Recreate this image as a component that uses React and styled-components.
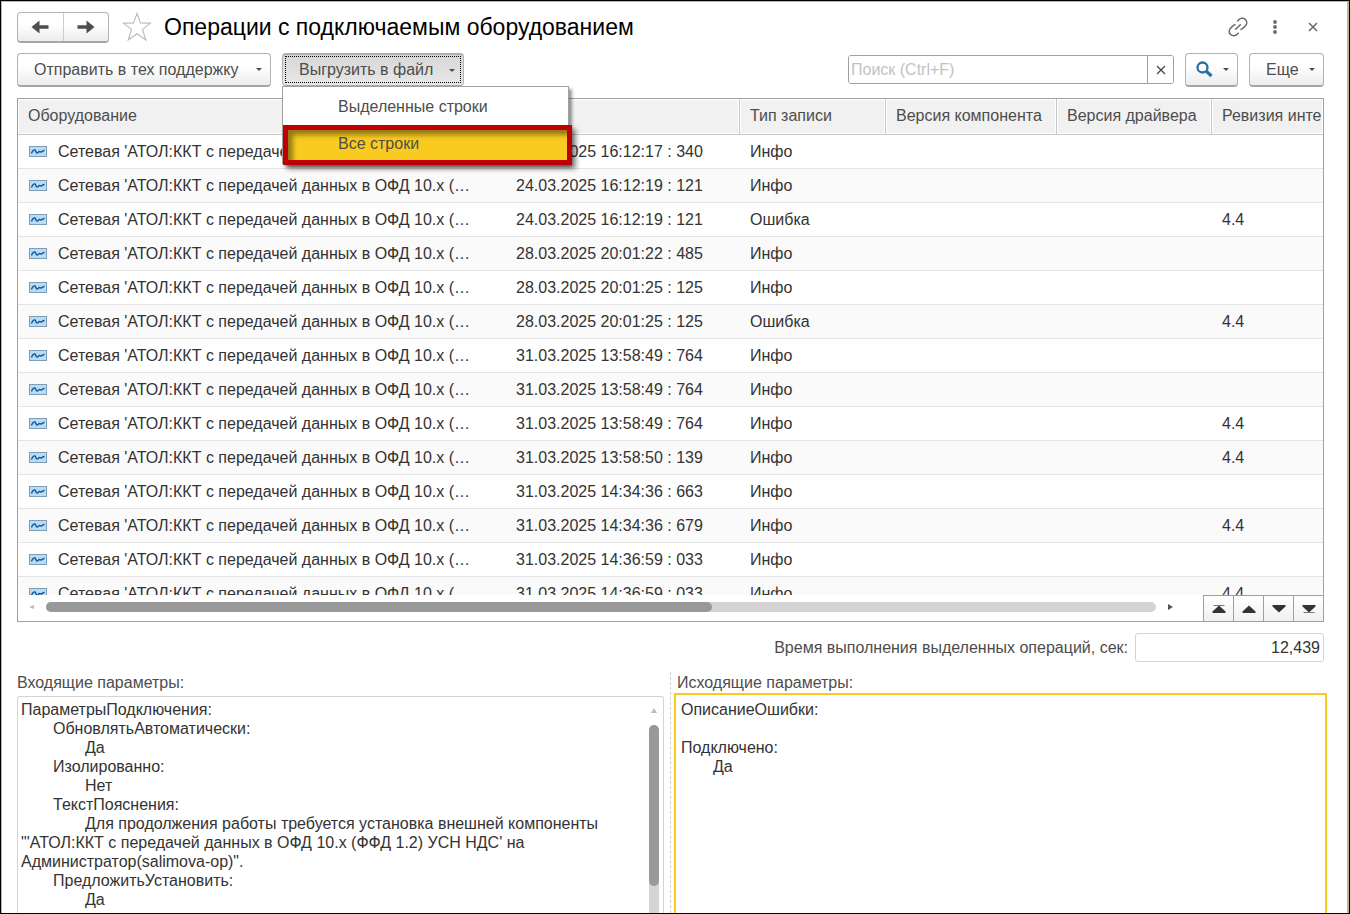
import React from "react";
import styled, { createGlobalStyle, css } from "styled-components";

const GlobalStyle = createGlobalStyle`
  *, *::before, *::after { box-sizing: border-box; }
  body { margin: 0; background: #fff; }
  body, button, input, textarea { font-family: "Liberation Sans", Arial, sans-serif; font-size: 16px; }
`;

const AppWindow = styled.div`
  display: flex;
  flex-direction: column;
  min-height: 100vh;
  border: 1px solid #000;
  color: #333;
`;

const Form = styled.main`
  flex: 1;
  display: flex;
  flex-direction: column;
  padding: 10px 23px 0 15px;
  border: 1px solid #c9b987;
  border-right: 2px solid #bdb597;
  border-bottom: 0;
`;

const raised = css`
  border: 1px solid #b3b3b3;
  border-bottom: 2px solid #a6a6a6;
  border-radius: 4px;
  background: linear-gradient(#fff 40%, #ededed);
  color: #4d4d4d;
`;

const TitleBar = styled.header`
  display: flex;
  align-items: flex-start;
  height: 31px;
`;

const NavGroup = styled.div`
  ${raised}
  display: flex;
  width: 92px;
  height: 31px;
`;

const NavButton = styled.button`
  flex: 1;
  display: grid;
  place-items: center;
  padding: 0;
  border: 0;
  background: none;
  & + & { border-left: 1px solid #ccc; }
`;

const IconButton = styled.button`
  display: grid;
  place-items: center;
  width: ${(p) => p.$width}px;
  height: 29px;
  padding: 0;
  border: 0;
  background: none;
  color: #6b6b6b;
`;

const Title = styled.h1`
  flex: 1;
  margin: 0;
  color: #000;
  font-size: 23px;
  font-weight: 400;
  line-height: 31px;
  white-space: nowrap;
`;

const Toolbar = styled.div`
  display: flex;
  align-items: flex-start;
  height: 34px;
  margin-top: 10px;
`;

const Spacer = styled.div`
  flex: 1;
`;

const MenuAnchor = styled.div`
  position: relative;
  margin-left: 11px;
`;

const CommandButton = styled.button`
  ${raised}
  display: flex;
  align-items: center;
  justify-content: space-between;
  width: ${(p) => p.$width}px;
  height: 34px;
  margin-left: ${(p) => p.$gap || 0}px;
  padding: 0 8px 0 ${(p) => p.$indent || 16}px;
  white-space: nowrap;
  ${(p) =>
    p.$pressed &&
    css`
      height: 33px;
      border-top: 2px solid #b0b0b0;
      border-bottom-width: 1px;
      background: linear-gradient(#d6d6d6, #e8e8e8);
      outline: 1px dotted #000;
      outline-offset: -4px;
    `}
`;

const Menu = styled.ul`
  position: absolute;
  z-index: 2;
  top: 33px;
  left: 0;
  width: 287px;
  margin: 0;
  padding: 1px 0;
  list-style: none;
  border: 1px solid #a0a0a0;
  background: #fff;
  box-shadow: 3px 3px 3px rgba(0, 0, 0, 0.4);
`;

const MenuItem = styled.li`
  position: relative;
  height: 37px;
  background: ${(p) => (p.$current ? "#f9cb20" : "#fff")};
`;

const MenuCommand = styled.button`
  display: block;
  width: 100%;
  height: 37px;
  padding: 0 0 0 55px;
  border: 0;
  background: none;
  color: #4d4d4d;
  text-align: left;
`;

const Highlight = styled.span`
  position: absolute;
  inset: 0 -4px -3px 0;
  border: 5px solid #c00000;
  box-shadow: 4px 4px 5px rgba(0, 0, 0, 0.45), inset 5px 5px 5px rgba(0, 0, 0, 0.4);
  pointer-events: none;
`;

const SearchBox = styled.div`
  display: flex;
  width: 326px;
  height: 29px;
  margin-top: 2px;
  border: 1px solid #a0a0a0;
  border-radius: 3px;
  overflow: hidden;
`;

const SearchInput = styled.input`
  flex: 1;
  min-width: 0;
  padding: 0 2px;
  border: 0;
  color: #333;
  &::placeholder { color: #c2c2c2; opacity: 1; }
`;

const ClearButton = styled.button`
  display: grid;
  place-items: center;
  width: 26px;
  padding: 0;
  border: 0;
  border-left: 1px solid #a0a0a0;
  background: #fff;
`;

const TablePanel = styled.section`
  margin-top: 11px;
  border: 1px solid #a0a0a0;
`;

const TableViewport = styled.div`
  height: 496px;
  overflow: hidden;
`;

const LogTable = styled.table`
  width: 100%;
  table-layout: fixed;
  border-collapse: separate;
  border-spacing: 0;
  white-space: nowrap;
`;

const HeadCell = styled.th`
  width: ${(p) => (p.$width ? `${p.$width}px` : "auto")};
  height: 36px;
  padding: 0 0 2px 10px;
  overflow: hidden;
  border-bottom: 1px solid #c8c8c8;
  background: #f1f1f1;
  box-shadow: inset 0 0 0 1px #fff;
  color: #4d4d4d;
  font-weight: 400;
  text-align: left;
  &:not(:last-child) { border-right: 1px solid #c8c8c8; }
`;

const Row = styled.tr`
  &:nth-child(even) { background: #fafafa; }
`;

const Cell = styled.td`
  height: 34px;
  padding: 0 0 0 10px;
  overflow: hidden;
  border-bottom: 1px solid #e4e4e4;
`;

const Device = styled.span`
  display: flex;
  align-items: center;
  gap: 11px;
  padding-left: 1px;
`;

const TableFooter = styled.div`
  display: flex;
  align-items: stretch;
  height: 26px;
`;

const HScroll = styled.div`
  flex: 1;
  display: flex;
  align-items: center;
  gap: 11px;
  padding: 0 30px 2px 11px;
`;

const HTrack = styled.div`
  flex: 1;
  height: 10px;
  border-radius: 5px;
  background: #d4d4d4;
`;

const HThumb = styled.div`
  width: 60%;
  height: 10px;
  border-radius: 5px;
  background: #999;
`;

const StepButton = styled.button`
  display: grid;
  place-items: center;
  width: 30px;
  padding: 0;
  border: 0;
  border-top: 1px solid #a0a0a0;
  border-left: 1px solid #a0a0a0;
  background: linear-gradient(#fff, #f0f0f0);
`;

const TotalRow = styled.div`
  display: flex;
  align-items: center;
  justify-content: flex-end;
  gap: 7px;
  margin-top: 11px;
  color: #4d4d4d;
`;

const TotalInput = styled.input`
  width: 189px;
  height: 29px;
  padding: 0 3px;
  border: 1px solid #d4d4d4;
  border-radius: 3px;
  color: #333;
  text-align: right;
`;

const Panels = styled.div`
  flex: 1;
  display: grid;
  grid-template-columns: 1fr calc(50% + 1px);
  margin: 10px -3px 0 0;
`;

const Panel = styled.section`
  display: flex;
  flex-direction: column;
  min-width: 0;
  padding-right: ${(p) => (p.$split ? 6 : 0)}px;
  padding-left: ${(p) => (p.$split ? 0 : 3)}px;
  border-right: ${(p) => (p.$split ? "1px dashed #d0d0d0" : "0")};
`;

const PanelLabel = styled.label`
  height: 21px;
  padding-left: ${(p) => p.$indent || 0}px;
  color: #4d4d4d;
  line-height: 22px;
`;

const TextBox = styled.div`
  flex: 1;
  display: flex;
  min-height: 216px;
  margin-top: ${(p) => (p.$focused ? 0 : 3)}px;
  border: ${(p) => (p.$focused ? "2px solid #f9cb20" : "1px solid #d4d4d4")};
  border-bottom: 0;
  border-radius: ${(p) => (p.$focused ? "0" : "3px 3px 0 0")};
`;

const TextArea = styled.textarea`
  flex: 1;
  min-width: 0;
  padding: ${(p) => (p.$focused ? "5px 5px 0" : "3px 3px 0")};
  overflow: hidden;
  border: 0;
  outline: 0;
  background: none;
  color: #333;
  line-height: 19px;
  resize: none;
  tab-size: 32px;
`;

const VScroll = styled.div`
  display: flex;
  flex-direction: column;
  align-items: center;
  width: 18px;
  padding-top: 11px;
`;

const VTrack = styled.div`
  flex: 1;
  width: 10px;
  margin-top: 11px;
  border-radius: 5px 5px 0 0;
  background: #d4d4d4;
`;

const VThumb = styled.div`
  height: 161px;
  border-radius: 5px;
  background: #999;
`;

const Caret = () => (
  <svg width="6" height="3" viewBox="0 0 6 3" aria-hidden="true">
    <path d="M0 0h6L3 3z" fill="#4d4d4d" />
  </svg>
);

const ArrowIcon = ({ right }) => (
  <svg width="18" height="14" viewBox="0 0 18 14" aria-hidden="true">
    <path
      transform={right ? "matrix(-1 0 0 1 18 0)" : undefined}
      d="M17.500 5.300H8.500V.5L.5 7l8 6.500V8.700h9z"
      fill="#4d4d4d"
    />
  </svg>
);

const StarIcon = () => (
  <svg width="30" height="29" viewBox="0 0 30 29" aria-hidden="true">
    <path
      d="M15 1.500l3.500 9.400 10 .2-8 6.300 3.300 10.600L15 21.700l-8.800 6.300 3.300-10.600-8-6.300 10-.2z"
      fill="#fff"
      stroke="#b4bbc2"
      strokeWidth="1.100"
    />
  </svg>
);

const LinkIcon = () => (
  <svg width="20" height="20" viewBox="0 0 20 20" fill="none" stroke="#6b6b6b" strokeWidth="1.600" aria-hidden="true">
    <path d="M9.300 4.300l1.500-1.600c1.700-1.700 4.800-1.900 6.600-.2 1.800 1.700 1.700 4.500.1 6.200l-2.500 2.500c-.8.800-1.600 1.200-2.600 1.300" />
    <path d="M10.700 15.700l-1.500 1.600c-1.700 1.700-4.800 1.900-6.600.2-1.800-1.700-1.700-4.500-.1-6.200L5 8.800c.8-.8 1.600-1.200 2.600-1.300" />
    <path d="M7.200 12.800l5.600-5.600" />
  </svg>
);

const KebabIcon = () => (
  <svg width="4" height="14" viewBox="0 0 4 14" fill="#6b6b6b" aria-hidden="true">
    <circle cx="2" cy="2" r="1.900" />
    <circle cx="2" cy="7" r="1.900" />
    <circle cx="2" cy="12" r="1.900" />
  </svg>
);

const CrossIcon = ({ color, weight }) => (
  <svg width="10" height="10" viewBox="0 0 10 10" stroke={color} strokeWidth={weight} aria-hidden="true">
    <path d="M1 1l8 8M9 1L1 9" />
  </svg>
);

const MagnifierIcon = () => (
  <svg width="17" height="17" viewBox="0 0 17 17" fill="none" stroke="#2471a8" aria-hidden="true">
    <circle cx="6.500" cy="6.500" r="5" strokeWidth="2.300" />
    <path d="M10 10l5.500 5" strokeWidth="3.200" />
  </svg>
);

const DeviceIcon = () => (
  <svg width="18" height="11" viewBox="0 0 18 11" fill="none" aria-hidden="true">
    <rect x=".5" y=".5" width="17" height="10" fill="#b9dbf3" stroke="#7f9db5" />
    <path d="M2.500 7.500C3.500 4.500 5 3.500 6 4s.8 3 2 3 1.500-1.500 2.500-1.500.8.800 1.700.5S13.500 4.500 15.500 4.500" stroke="#10559a" strokeWidth="1.400" />
  </svg>
);

const ScrollArrow = ({ d, color = "#555" }) => (
  <svg width="6" height="6" viewBox="0 0 6 6" aria-hidden="true">
    <path d={d} fill={color} />
  </svg>
);

const StepIcon = ({ down, edge }) => (
  <svg width="14" height="10" viewBox="0 0 14 10" aria-hidden="true">
    <g transform={down ? "rotate(180 7 5)" : undefined} fill="#333">
      <path d="M7 1.500l6.500 6v1.500H.5V7.500z" />
      {edge && <path d="M1.500 1h11v1h-11z" fill="#777" />}
    </g>
  </svg>
);

const DEVICE = "Сетевая 'АТОЛ:ККТ с передачей данных в ОФД 10.x (…";

const columns = [
  { title: "Оборудование" },
  { title: "", width: 234 },
  { title: "Тип записи", width: 146 },
  { title: "Версия компонента", width: 171 },
  { title: "Версия драйвера", width: 155 },
  { title: "Ревизия инте", width: 111 },
];

const records = [
  ["24.03.2025 16:12:17 : 340", "Инфо", ""],
  ["24.03.2025 16:12:19 : 121", "Инфо", ""],
  ["24.03.2025 16:12:19 : 121", "Ошибка", "4.4"],
  ["28.03.2025 20:01:22 : 485", "Инфо", ""],
  ["28.03.2025 20:01:25 : 125", "Инфо", ""],
  ["28.03.2025 20:01:25 : 125", "Ошибка", "4.4"],
  ["31.03.2025 13:58:49 : 764", "Инфо", ""],
  ["31.03.2025 13:58:49 : 764", "Инфо", ""],
  ["31.03.2025 13:58:49 : 764", "Инфо", "4.4"],
  ["31.03.2025 13:58:50 : 139", "Инфо", "4.4"],
  ["31.03.2025 14:34:36 : 663", "Инфо", ""],
  ["31.03.2025 14:34:36 : 679", "Инфо", "4.4"],
  ["31.03.2025 14:36:59 : 033", "Инфо", ""],
  ["31.03.2025 14:36:59 : 033", "Инфо", "4.4"],
];

const incoming = [
  "ПараметрыПодключения:",
  "\tОбновлятьАвтоматически:",
  "\t\tДа",
  "\tИзолированно:",
  "\t\tНет",
  "\tТекстПояснения:",
  "\t\tДля продолжения работы требуется установка внешней компоненты \"'АТОЛ:ККТ с передачей данных в ОФД 10.x (ФФД 1.2) УСН НДС' на Администратор(salimova-op)\".",
  "\tПредложитьУстановить:",
  "\t\tДа",
].join("\n");

const outgoing = "ОписаниеОшибки:\n\nПодключено:\n\tДа";

export default function App() {
  return (
    <AppWindow>
      <GlobalStyle />
      <Form>
        <TitleBar>
          <NavGroup>
            <NavButton aria-label="Назад"><ArrowIcon /></NavButton>
            <NavButton aria-label="Вперед"><ArrowIcon right /></NavButton>
          </NavGroup>
          <IconButton $width={55} aria-label="В избранное"><StarIcon /></IconButton>
          <Title>Операции с подключаемым оборудованием</Title>
          <IconButton $width={20} aria-label="Получить ссылку"><LinkIcon /></IconButton>
          <IconButton $width={54} aria-label="Меню"><KebabIcon /></IconButton>
          <IconButton $width={22} aria-label="Закрыть"><CrossIcon color="#6b6b6b" weight="1.600" /></IconButton>
        </TitleBar>

        <Toolbar>
          <CommandButton $width={254}>Отправить в тех поддержку <Caret /></CommandButton>
          <MenuAnchor>
            <CommandButton $width={182} $pressed aria-expanded="true">Выгрузить в файл <Caret /></CommandButton>
            <Menu>
              <MenuItem><MenuCommand>Выделенные строки</MenuCommand></MenuItem>
              <MenuItem $current>
                <MenuCommand>Все строки</MenuCommand>
                <Highlight />
              </MenuItem>
            </Menu>
          </MenuAnchor>
          <Spacer />
          <SearchBox>
            <SearchInput type="text" placeholder="Поиск (Ctrl+F)" aria-label="Поиск" />
            <ClearButton aria-label="Очистить"><CrossIcon color="#444" weight="1.200" /></ClearButton>
          </SearchBox>
          <CommandButton $width={53} $gap={11} $indent={10} aria-label="Найти"><MagnifierIcon /><Caret /></CommandButton>
          <CommandButton $width={75} $gap={11}>Еще <Caret /></CommandButton>
        </Toolbar>

        <TablePanel>
          <TableViewport>
            <LogTable>
              <thead>
                <tr>
                  {columns.map((c, i) => (
                    <HeadCell key={i} $width={c.width}>{c.title}</HeadCell>
                  ))}
                </tr>
              </thead>
              <tbody>
                {records.map(([time, type, revision], i) => (
                  <Row key={i}>
                    <Cell><Device><DeviceIcon />{DEVICE}</Device></Cell>
                    <Cell>{time}</Cell>
                    <Cell>{type}</Cell>
                    <Cell />
                    <Cell />
                    <Cell>{revision}</Cell>
                  </Row>
                ))}
              </tbody>
            </LogTable>
          </TableViewport>
          <TableFooter>
            <HScroll>
              <ScrollArrow d="M5 1v4L0 3z" color="#bbb" />
              <HTrack><HThumb /></HTrack>
              <ScrollArrow d="M1 0v6l5-3z" />
            </HScroll>
            <StepButton aria-label="В начало"><StepIcon edge /></StepButton>
            <StepButton aria-label="Вверх"><StepIcon /></StepButton>
            <StepButton aria-label="Вниз"><StepIcon down /></StepButton>
            <StepButton aria-label="В конец"><StepIcon down edge /></StepButton>
          </TableFooter>
        </TablePanel>

        <TotalRow>
          <label htmlFor="total">Время выполнения выделенных операций, сек:</label>
          <TotalInput id="total" type="text" defaultValue="12,439" />
        </TotalRow>

        <Panels>
          <Panel $split>
            <PanelLabel htmlFor="incoming">Входящие параметры:</PanelLabel>
            <TextBox>
              <TextArea id="incoming" defaultValue={incoming} spellCheck={false} />
              <VScroll>
                <ScrollArrow d="M3 0l3 5H0z" color="#bbb" />
                <VTrack><VThumb /></VTrack>
              </VScroll>
            </TextBox>
          </Panel>
          <Panel>
            <PanelLabel htmlFor="outgoing" $indent={3}>Исходящие параметры:</PanelLabel>
            <TextBox $focused>
              <TextArea id="outgoing" $focused defaultValue={outgoing} spellCheck={false} />
            </TextBox>
          </Panel>
        </Panels>
      </Form>
    </AppWindow>
  );
}
